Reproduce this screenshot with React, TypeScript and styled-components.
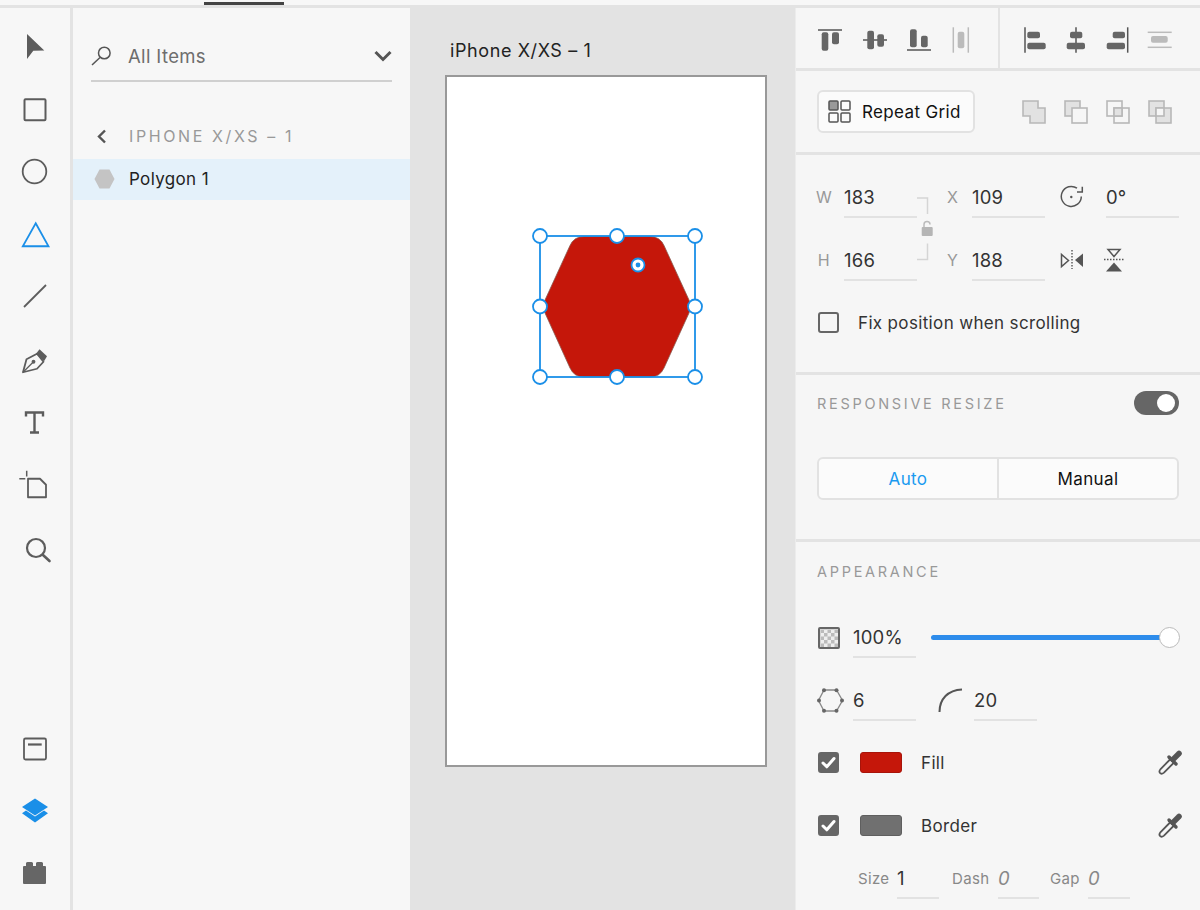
import styled, { createGlobalStyle } from "styled-components";

const GlobalStyle = createGlobalStyle`
    html, body {
        margin: 0;
        padding: 0;
        background: #f7f7f7;
    }
    * {
        box-sizing: border-box;
    }
`;

const Page = styled.div`
    width: 1200px;
    height: 910px;
    overflow: hidden;
    display: flex;
    flex-direction: column;
    background: #f7f7f7;
    color: #333;
    font-family: Inter, "Liberation Sans", sans-serif;
    font-size: 17px;
    letter-spacing: 0.35px;
`;

const TopBar = styled.div`
    height: 8px;
    flex: none;
    padding: 2px 0 0 204px;
    border-bottom: 3px solid #e3e3e3;
`;

const ActiveTab = styled.div`
    width: 80px;
    height: 3px;
    background: #444;
`;

const Workspace = styled.div`
    flex: 1;
    min-height: 0;
    display: flex;
`;

/* left tool rail */
const ToolRail = styled.nav`
    width: 73px;
    flex: none;
    display: flex;
    flex-direction: column;
    padding: 7.6px 0 6px 0;
    border-right: 3px solid #e3e3e3;
`;

const Tool = styled.div`
    width: 70px;
    height: 62.75px;
    flex: none;
    display: flex;
    align-items: center;
    justify-content: center;
`;

const RailBottom = styled.div`
    margin-top: auto;
    display: flex;
    flex-direction: column;
`;

const BottomTool = styled(Tool)`
    height: 62px;
`;

/* layers panel */
const LayersPanel = styled.aside`
    width: 337px;
    flex: none;
    display: flex;
    flex-direction: column;
`;

const SearchRow = styled.div`
    margin: 28px 18px 0;
    height: 46px;
    padding-bottom: 4px;
    display: flex;
    align-items: center;
    border-bottom: 2px solid #d0d0d0;
`;

const SearchText = styled.span`
    margin-left: 17px;
    flex: 1;
    font-size: 18.5px;
    color: #6d6d6d;
`;

const BackRow = styled.div`
    margin-top: 34px;
    height: 40px;
    display: flex;
    align-items: center;
    padding-left: 24px;
`;

const BackTitle = styled.span`
    margin-left: 22px;
    font-size: 16px;
    letter-spacing: 2.6px;
    color: #999;
`;

const LayerRow = styled.div`
    margin-top: 3px;
    height: 41px;
    display: flex;
    align-items: center;
    padding: 0 0 1px 21px;
    background: #e4f1fa;
    color: #222;
`;

const LayerName = styled.span`
    margin-left: 14px;
`;

/* canvas */
const Canvas = styled.main`
    width: 385px;
    flex: none;
    background: #e3e3e3;
    padding: 32px 0 0 35px;
`;

const ArtboardTitle = styled.div`
    height: 22px;
    line-height: 22px;
    margin: 0 0 13px 5px;
    font-size: 18px;
    letter-spacing: 0.6px;
    color: #222;
`;

const Artboard = styled.div`
    position: relative;
    width: 322px;
    height: 692px;
    background: #fff;
    border: 2px solid #999;
`;

const Selection = styled.svg`
    position: absolute;
    left: 83px;
    top: 149px;
`;

/* inspector */
const Inspector = styled.aside`
    flex: 1;
    min-width: 0;
    display: flex;
    flex-direction: column;
    background: #f6f6f6;
    border-left: 1px solid #ececec;
`;

const AlignBar = styled.section`
    height: 63px;
    flex: none;
    display: flex;
    border-bottom: 3px solid #e3e3e3;
`;

const AlignGroup = styled.div<{ $width: number; $pad: number; $gap: number }>`
    width: ${(p) => p.$width}px;
    padding: 17px 0 0 ${(p) => p.$pad}px;
    display: flex;
    gap: ${(p) => p.$gap}px;
`;

const AlignDivider = styled.div`
    width: 2px;
    background: #e3e3e3;
`;

const GridBar = styled.section`
    height: 84px;
    flex: none;
    display: flex;
    align-items: center;
    justify-content: space-between;
    padding: 0 28px 0 21px;
    border-bottom: 3px solid #e3e3e3;
`;

const RepeatButton = styled.button`
    width: 158px;
    height: 43px;
    display: flex;
    align-items: center;
    gap: 11px;
    padding: 0 0 0 9px;
    background: #fbfbfb;
    border: 2px solid #e2e2e2;
    border-radius: 6px;
    font: inherit;
    letter-spacing: inherit;
    color: #111;
`;

const BooleanGroup = styled.div`
    display: flex;
    gap: 18px;
`;

const GeometrySection = styled.section`
    height: 220px;
    flex: none;
    padding: 22px 0 0 20px;
    border-bottom: 3px solid #e3e3e3;
`;

const GeometryGrid = styled.div`
    display: grid;
    grid-template-columns: 28px 73px 30px 25px 73px 61px 73px;
    grid-template-rows: 41px 41px;
    row-gap: 22px;
`;

const AxisLabel = styled.span<{ $lead?: number }>`
    line-height: 40px;
    padding-right: ${(p) => (p.$lead ? 0 : 14)}px;
    text-align: ${(p) => (p.$lead ? "left" : "right")};
    font-size: 16px;
    color: #999;
`;

const ValueField = styled.div<{ $width?: number; $muted?: boolean }>`
    width: ${(p) => (p.$width ? `${p.$width}px` : "auto")};
    height: 41px;
    line-height: 40px;
    font-size: 18.5px;
    letter-spacing: 0.2px;
    color: ${(p) => (p.$muted ? "#888" : "#333")};
    font-style: ${(p) => (p.$muted ? "italic" : "normal")};
    border-bottom: 2px solid #e2e2e2;
`;

const LockLink = styled.svg`
    grid-column: 3;
    grid-row: 1 / 3;
`;

const GridIcon = styled.div`
    display: flex;
    align-items: center;
    gap: 20px;
    height: 41px;
    padding: 0 0 1px 15px;

    svg {
        flex: none;
    }
`;

const CheckRow = styled.div`
    margin: 31px 0 0 2px;
    display: flex;
    align-items: center;
    gap: 19px;
    color: #333;
`;

const CheckBox = styled.div<{ $checked?: boolean }>`
    width: 21px;
    height: 21px;
    flex: none;
    display: flex;
    align-items: center;
    justify-content: center;
    border-radius: 3px;
    border: 2px solid #666;
    background: ${(p) => (p.$checked ? "#666" : "transparent")};
`;

const ResponsiveSection = styled.section`
    height: 167px;
    flex: none;
    padding: 16px 21px 0 21px;
    border-bottom: 3px solid #e3e3e3;
`;

const SectionHead = styled.div`
    display: flex;
    align-items: center;
    justify-content: space-between;
    height: 24px;
`;

const SectionTitle = styled.h3`
    margin: 0;
    font-size: 14.5px;
    font-weight: 400;
    letter-spacing: 2.7px;
    color: #999;
`;

const Toggle = styled.div`
    width: 45px;
    height: 24px;
    display: flex;
    align-items: center;
    justify-content: flex-end;
    padding-right: 4px;
    border-radius: 12px;
    background: #666;
`;

const ToggleKnob = styled.div`
    width: 18px;
    height: 18px;
    border-radius: 50%;
    background: #fff;
`;

const Segmented = styled.div`
    margin-top: 42px;
    height: 43px;
    display: grid;
    grid-template-columns: 180px 1fr;
    background: #fbfbfb;
    border: 2px solid #e2e2e2;
    border-radius: 6px;
`;

const Segment = styled.div<{ $active?: boolean }>`
    display: flex;
    align-items: center;
    justify-content: center;
    color: ${(p) => (p.$active ? "#1a9af0" : "#111")};
    border-right: ${(p) => (p.$active ? "2px solid #e2e2e2" : "none")};
`;

const AppearanceSection = styled.section`
    flex: 1;
    padding: 20px 0 0 21px;
`;

const AppearanceTitle = styled(SectionTitle)`
    line-height: 20px;
`;

const OpacityRow = styled.div`
    margin-top: 35px;
    display: flex;
    align-items: center;
`;

const ShapeRow = styled(OpacityRow)`
    margin-top: 22px;
`;

const RowIcon = styled.div`
    width: 36px;
    flex: none;
    display: flex;
`;

const Slider = styled.div`
    position: relative;
    margin-left: 15px;
    width: 239px;
    height: 5px;
    border-radius: 3px;
    background: #2d8ceb;
`;

const SliderKnob = styled.div`
    position: absolute;
    right: -10px;
    top: -8px;
    width: 21px;
    height: 21px;
    border-radius: 50%;
    background: #fff;
    border: 1px solid #bbb;
`;

const CornerSlot = styled.div`
    width: 36px;
    margin-left: 22px;
    flex: none;
    display: flex;
`;

const PaintRow = styled.div<{ $top: number }>`
    margin-top: ${(p) => p.$top}px;
    height: 21px;
    padding: 0 17px 0 1px;
    display: flex;
    align-items: center;
`;

const Swatch = styled.div<{ $color: string; $edge: string }>`
    width: 42px;
    height: 21px;
    margin-left: 21px;
    border-radius: 3px;
    background: ${(p) => p.$color};
    border: 1px solid ${(p) => p.$edge};
`;

const PaintLabel = styled.span`
    margin-left: 19px;
    flex: 1;
    color: #333;
`;

const StrokeRow = styled.div`
    margin: 22px 0 0 41px;
    display: grid;
    grid-template-columns: 39px 42px 59px 41px 49px 42px;
`;

const StrokeLabel = styled.span<{ $lead?: number }>`
    line-height: 42px;
    padding-left: ${(p) => p.$lead ?? 0}px;
    font-size: 15px;
    color: #888;
`;

const DARK = "#5c5c5c";
const BLUE = "#1a8fe8";
const GREY = "#bbb";

function ToolIcon({ cy, children }: { cy: number; children: React.ReactNode }) {
    return (
        <svg width="36" height="36" viewBox={`17 ${cy - 18} 36 36`} fill="none">
            {children}
        </svg>
    );
}

function AlignIcon({ children, nudge }: { children: React.ReactNode; nudge?: boolean }) {
    return (
        <svg width="30" height="30" viewBox="0 0 30 30" fill={nudge ? GREY : "#666"}>
            {children}
        </svg>
    );
}

function Bar({ x, y, w, h }: { x: number; y: number; w: number; h: number }) {
    return <rect x={x} y={y} width={w} height={h} rx="2" />;
}

function Rule({ x1, y1, x2, y2, grey }: { x1: number; y1: number; x2: number; y2: number; grey?: boolean }) {
    return <line x1={x1} y1={y1} x2={x2} y2={y2} stroke={grey ? GREY : "#555"} strokeWidth="1.5" />;
}

function Check() {
    return (
        <svg width="15" height="13" viewBox="0 0 15 13" fill="none">
            <path d="M2 7l3.8 3.8L13 2.5" stroke="#fff" strokeWidth="3" strokeLinecap="round" strokeLinejoin="round" />
        </svg>
    );
}

function Dropper() {
    return (
        <svg width="26" height="26" viewBox="0 0 26 26" fill="none">
            <path d="M14 8.5L3.6 19q-2 2.400-.6 4t4-.4L17.500 12" stroke="#555" strokeWidth="1.800" />
            <path d="M12 7l7 7" stroke="#555" strokeWidth="3.400" strokeLinecap="round" />
            <path d="M16 9.500l6-6" stroke="#555" strokeWidth="5.500" strokeLinecap="round" />
        </svg>
    );
}

function BooleanIcon({ kind }: { kind: "add" | "subtract" | "intersect" | "exclude" }) {
    const stroke = "#b8b8b8";
    const fill = "#e2e2e2";
    if (kind === "add") {
        return (
            <svg width="24" height="24" viewBox="0 0 24 24">
                <path d="M1 1h15v7h7v15H8v-7H1z" fill={fill} stroke={stroke} strokeWidth="1.600" />
            </svg>
        );
    }
    return (
        <svg width="24" height="24" viewBox="0 0 24 24" fill="none">
            <rect x="1" y="1" width="15" height="15" fill={kind === "intersect" ? "none" : fill} stroke={stroke} strokeWidth="1.600" />
            <rect x="8" y="8" width="15" height="15" fill={kind === "subtract" ? "#f6f6f6" : kind === "exclude" ? fill : "none"} stroke={stroke} strokeWidth="1.600" />
            {kind === "intersect" && <rect x="8" y="8" width="8" height="8" fill={fill} stroke={stroke} strokeWidth="1.600" />}
            {kind === "exclude" && <rect x="8" y="8" width="8" height="8" fill="#f6f6f6" stroke={stroke} strokeWidth="1.600" />}
        </svg>
    );
}

const handles: [number, number][] = [
    [540, 236],
    [617, 236],
    [695, 236],
    [540, 306.5],
    [695, 306.5],
    [540, 377],
    [617, 377],
    [695, 377],
];

function App() {
    return (
        <Page>
            <GlobalStyle />
            <TopBar>
                <ActiveTab />
            </TopBar>
            <Workspace>
                <ToolRail>
                    <Tool>
                        <ToolIcon cy={47}>
                            <path d="M27 34l17.300 16.500-11 .3L27 59z" fill={DARK} />
                        </ToolIcon>
                    </Tool>
                    <Tool>
                        <ToolIcon cy={109.75}>
                            <rect x="24.500" y="99" width="21" height="21" rx="1" stroke={DARK} strokeWidth="2" />
                        </ToolIcon>
                    </Tool>
                    <Tool>
                        <ToolIcon cy={172.5}>
                            <circle cx="34.500" cy="172" r="11.800" stroke={DARK} strokeWidth="1.800" />
                        </ToolIcon>
                    </Tool>
                    <Tool>
                        <ToolIcon cy={235.25}>
                            <path d="M35.700 223.500L48.500 246.500H22.800z" stroke={BLUE} strokeWidth="1.800" />
                        </ToolIcon>
                    </Tool>
                    <Tool>
                        <ToolIcon cy={298}>
                            <path d="M24 307l22-22" stroke={DARK} strokeWidth="1.800" />
                        </ToolIcon>
                    </Tool>
                    <Tool>
                        <ToolIcon cy={360.75}>
                            <path d="M23 372l3.500-13 10.500-5.500 6.500 8-6.500 7z" stroke={DARK} strokeWidth="1.800" strokeLinejoin="round" />
                            <path d="M39.500 349l7.500 7-3 5-8-7.500z" fill={DARK} />
                            <path d="M23 372l10-10" stroke={DARK} strokeWidth="1.300" />
                            <circle cx="33.500" cy="361.500" r="1.900" fill={DARK} />
                        </ToolIcon>
                    </Tool>
                    <Tool>
                        <ToolIcon cy={423.5}>
                            <path d="M26 417v-4h17v4M34.500 413v20M30 433h9" stroke={DARK} strokeWidth="2.400" />
                        </ToolIcon>
                    </Tool>
                    <Tool>
                        <ToolIcon cy={486.25}>
                            <path d="M28 479h12l6 6v12.500H28z" stroke={DARK} strokeWidth="1.800" strokeLinejoin="round" />
                            <path d="M26.700 471v5.700M19.300 479h6" stroke={DARK} strokeWidth="1.500" />
                        </ToolIcon>
                    </Tool>
                    <Tool>
                        <ToolIcon cy={549}>
                            <circle cx="36" cy="548" r="9" stroke={DARK} strokeWidth="2.200" />
                            <path d="M43 555l6.500 6" stroke={DARK} strokeWidth="2.600" strokeLinecap="round" />
                        </ToolIcon>
                    </Tool>
                    <RailBottom>
                        <BottomTool>
                            <ToolIcon cy={749}>
                                <rect x="24" y="738.500" width="22" height="21" rx="1.500" stroke={DARK} strokeWidth="1.800" />
                                <path d="M28 744.500h13.700" stroke={DARK} strokeWidth="2.200" />
                            </ToolIcon>
                        </BottomTool>
                        <BottomTool>
                            <ToolIcon cy={811}>
                                <path d="M35 798.500l13 8.500-13 8.500-13-8.500z" fill={BLUE} />
                                <path d="M26 810.500l9 6 9-6 4 2.700-13 9.300-13-9.300z" fill={BLUE} />
                            </ToolIcon>
                        </BottomTool>
                        <BottomTool>
                            <ToolIcon cy={873}>
                                <path d="M24 866h2v-3a2 2 0 0 1 2-1h3a2 2 0 0 1 2 1v3h3v-3a2 2 0 0 1 2-1h3a2 2 0 0 1 2 1v3h2a1 1 0 0 1 1 1v16a1 1 0 0 1-1 1H24a1 1 0 0 1-1-1v-16a1 1 0 0 1 1-1z" fill="#666" />
                            </ToolIcon>
                        </BottomTool>
                    </RailBottom>
                </ToolRail>

                <LayersPanel>
                    <SearchRow>
                        <svg width="20" height="20" viewBox="0 0 20 20" fill="none">
                            <circle cx="13.300" cy="7" r="5.800" stroke="#555" strokeWidth="1.500" />
                            <path d="M9 11.500L1 19" stroke="#555" strokeWidth="1.500" />
                        </svg>
                        <SearchText>All Items</SearchText>
                        <svg width="18" height="12" viewBox="0 0 18 12" fill="none">
                            <path d="M1.500 2L9 9.500 16.500 2" stroke="#555" strokeWidth="3" />
                        </svg>
                    </SearchRow>
                    <BackRow>
                        <svg width="10" height="15" viewBox="0 0 10 15" fill="none">
                            <path d="M8 1.500L2 7.500l6 6" stroke="#555" strokeWidth="2.400" />
                        </svg>
                        <BackTitle>IPHONE X/XS – 1</BackTitle>
                    </BackRow>
                    <LayerRow>
                        <svg width="21" height="20" viewBox="0 0 21 20">
                            <path d="M5.500.5h10l5 9.500-5 9.500h-10L.5 10z" fill="#c4c4c4" />
                        </svg>
                        <LayerName>Polygon 1</LayerName>
                    </LayerRow>
                </LayersPanel>

                <Canvas>
                    <ArtboardTitle>iPhone X/XS – 1</ArtboardTitle>
                    <Artboard>
                        <Selection width="175" height="161" viewBox="530 226 175 161" fill="none">
                            <path
                                d="M545 300L570 245.500Q574 236.500 584 236.500H650Q660 236.500 664 245.500L689 300Q692 306.500 689 313L664 368Q660 377 650 377H584Q574 377 570 368L545 313Q542 306.500 545 300Z"
                                fill="#c5170a"
                                stroke="#8a5a50"
                                strokeWidth="0.800"
                            />
                            <rect x="540" y="236" width="155" height="141" stroke={BLUE} strokeWidth="1.800" />
                            {handles.map(([x, y]) => (
                                <circle key={`${x}-${y}`} cx={x} cy={y} r="7" fill="#fff" stroke={BLUE} strokeWidth="1.800" />
                            ))}
                            <circle cx="638" cy="265" r="6.500" fill="#fff" stroke={BLUE} strokeWidth="1.800" />
                            <circle cx="638" cy="265" r="2.400" fill={BLUE} />
                        </Selection>
                    </Artboard>
                </Canvas>

                <Inspector>
                    <AlignBar>
                        <AlignGroup $width={202} $pad={19} $gap={15}>
                            <AlignIcon>
                                <Rule x1={3} y1={5} x2={27} y2={5} />
                                <Bar x={6.7} y={7.3} w={6.6} h={18.4} />
                                <Bar x={17} y={7.3} w={7} h={12} />
                            </AlignIcon>
                            <AlignIcon>
                                <Rule x1={3} y1={15} x2={27} y2={15} />
                                <Bar x={7.3} y={5.7} w={6.7} h={18.6} />
                                <Bar x={17.3} y={9.3} w={6.7} h={12.4} />
                            </AlignIcon>
                            <AlignIcon>
                                <Rule x1={2} y1={25} x2={26} y2={25} />
                                <Bar x={5} y={4.3} w={6.7} h={18} />
                                <Bar x={16} y={10.7} w={6.7} h={11.6} />
                            </AlignIcon>
                            <AlignIcon nudge>
                                <Rule x1={3.3} y1={2.3} x2={3.3} y2={27.7} grey />
                                <Rule x1={18.3} y1={2.3} x2={18.3} y2={27.7} grey />
                                <Bar x={7.7} y={6.7} w={6.6} h={16.6} />
                            </AlignIcon>
                        </AlignGroup>
                        <AlignDivider />
                        <AlignGroup $width={200} $pad={20} $gap={12}>
                            <AlignIcon>
                                <Rule x1={5} y1={2.3} x2={5} y2={27.7} />
                                <Bar x={7.3} y={6.7} w={12.7} h={6.6} />
                                <Bar x={7.3} y={17.7} w={18.4} h={6.6} />
                            </AlignIcon>
                            <AlignIcon>
                                <Rule x1={14} y1={2.3} x2={14} y2={27.7} />
                                <Bar x={8} y={6.7} w={12.3} h={6.6} />
                                <Bar x={4.7} y={17.7} w={18.3} h={6.6} />
                            </AlignIcon>
                            <AlignIcon>
                                <Rule x1={23.7} y1={2.3} x2={23.7} y2={27.7} />
                                <Bar x={8.7} y={6.7} w={12.3} h={6.6} />
                                <Bar x={2.7} y={17.7} w={18.3} h={6.6} />
                            </AlignIcon>
                            <AlignIcon nudge>
                                <Rule x1={1.7} y1={7.3} x2={25.7} y2={7.3} grey />
                                <Rule x1={1.7} y1={22.3} x2={25.7} y2={22.3} grey />
                                <Bar x={5} y={11} w={16.7} h={6.7} />
                            </AlignIcon>
                        </AlignGroup>
                    </AlignBar>

                    <GridBar>
                        <RepeatButton>
                            <svg width="23" height="23" viewBox="0 0 23 23" fill="none" stroke="#555" strokeWidth="1.500">
                                <rect x="1" y="1" width="9" height="9" rx="1" fill="#999" />
                                <rect x="13" y="1" width="9" height="9" rx="1" />
                                <rect x="1" y="13" width="9" height="9" rx="1" />
                                <rect x="13" y="13" width="9" height="9" rx="1" />
                            </svg>
                            Repeat Grid
                        </RepeatButton>
                        <BooleanGroup>
                            <BooleanIcon kind="add" />
                            <BooleanIcon kind="subtract" />
                            <BooleanIcon kind="intersect" />
                            <BooleanIcon kind="exclude" />
                        </BooleanGroup>
                    </GridBar>

                    <GeometrySection>
                        <GeometryGrid>
                            <AxisLabel>W</AxisLabel>
                            <ValueField>183</ValueField>
                            <LockLink width="30" height="104" viewBox="917 177 30 104" fill="none">
                                <path d="M917 198h10.500v16M917 259.500h10.500v-16" stroke="#d5d5d5" strokeWidth="1.500" />
                                <path d="M924 227v-2.500a3 3 0 0 1 6 0" stroke="#bbb" strokeWidth="1.500" />
                                <rect x="921.700" y="227" width="11" height="9" rx="1" fill="#b5b5b5" />
                            </LockLink>
                            <AxisLabel $lead={1}>X</AxisLabel>
                            <ValueField>109</ValueField>
                            <GridIcon>
                                <svg width="24" height="24" viewBox="0 0 24 24" fill="none">
                                    <path d="M17 3.200A10 10 0 1 0 21.300 11.500" stroke="#555" strokeWidth="1.500" />
                                    <path d="M17 7h5.300V1.800" stroke="#555" strokeWidth="1.500" />
                                    <circle cx="11.300" cy="12" r="1.200" fill="#555" />
                                </svg>
                            </GridIcon>
                            <ValueField>0°</ValueField>
                            <AxisLabel>H</AxisLabel>
                            <ValueField>166</ValueField>
                            <AxisLabel $lead={1}>Y</AxisLabel>
                            <ValueField>188</ValueField>
                            <GridIcon>
                                <svg width="24" height="22" viewBox="0 0 24 22" fill="none">
                                    <path d="M1.500 5.500v12l7-6z" stroke="#555" strokeWidth="1.500" />
                                    <path d="M23 4.500v13.500l-8-7z" fill="#555" />
                                    <path d="M12 1v19" stroke="#555" strokeWidth="1.400" strokeDasharray="1.500 1.500" />
                                </svg>
                                <svg width="20" height="24" viewBox="0 0 20 24" fill="none">
                                    <path d="M4 1.500h12l-6 7z" stroke="#555" strokeWidth="1.500" />
                                    <path d="M2 23.500h16l-8-9z" fill="#555" />
                                    <path d="M0 11.500h20" stroke="#555" strokeWidth="1.400" strokeDasharray="1.500 1.500" />
                                </svg>
                            </GridIcon>
                        </GeometryGrid>
                        <CheckRow>
                            <CheckBox />
                            Fix position when scrolling
                        </CheckRow>
                    </GeometrySection>

                    <ResponsiveSection>
                        <SectionHead>
                            <SectionTitle>RESPONSIVE RESIZE</SectionTitle>
                            <Toggle>
                                <ToggleKnob />
                            </Toggle>
                        </SectionHead>
                        <Segmented>
                            <Segment $active>Auto</Segment>
                            <Segment>Manual</Segment>
                        </Segmented>
                    </ResponsiveSection>

                    <AppearanceSection>
                        <AppearanceTitle>APPEARANCE</AppearanceTitle>
                        <OpacityRow>
                            <RowIcon>
                                <svg width="23" height="23" viewBox="0 0 23 23">
                                    <defs>
                                        <pattern id="checker" width="7" height="7" patternUnits="userSpaceOnUse">
                                            <rect width="7" height="7" fill="#eee" />
                                            <rect width="3.500" height="3.500" fill="#bbb" />
                                            <rect x="3.500" y="3.500" width="3.500" height="3.500" fill="#bbb" />
                                        </pattern>
                                    </defs>
                                    <rect x="2" y="2" width="20" height="20" rx="1" fill="url(#checker)" stroke="#666" strokeWidth="2" />
                                </svg>
                            </RowIcon>
                            <ValueField $width={63}>100%</ValueField>
                            <Slider>
                                <SliderKnob />
                            </Slider>
                        </OpacityRow>
                        <ShapeRow>
                            <RowIcon>
                                <svg width="27" height="25" viewBox="0 0 27 25" fill="none">
                                    <path d="M7 2h12.500l6 10.500-6 10.500H7L1.500 12.500z" stroke="#888" strokeWidth="1.300" />
                                    <g fill="#666">
                                        <circle cx="7" cy="2.200" r="2" />
                                        <circle cx="19.500" cy="2.200" r="2" />
                                        <circle cx="25" cy="12.500" r="2" />
                                        <circle cx="19.500" cy="22.800" r="2" />
                                        <circle cx="7" cy="22.800" r="2" />
                                        <circle cx="2" cy="12.500" r="2" />
                                    </g>
                                </svg>
                            </RowIcon>
                            <ValueField $width={63}>6</ValueField>
                            <CornerSlot>
                                <svg width="25" height="25" viewBox="0 0 25 25" fill="none">
                                    <path d="M1.500 24C1.500 11 10 2 24 1.500" stroke="#555" strokeWidth="2" />
                                </svg>
                            </CornerSlot>
                            <ValueField $width={63}>20</ValueField>
                        </ShapeRow>
                        <PaintRow $top={31}>
                            <CheckBox $checked>
                                <Check />
                            </CheckBox>
                            <Swatch $color="#c5170a" $edge="#a8140a" />
                            <PaintLabel>Fill</PaintLabel>
                            <Dropper />
                        </PaintRow>
                        <PaintRow $top={42}>
                            <CheckBox $checked>
                                <Check />
                            </CheckBox>
                            <Swatch $color="#707070" $edge="#5f5f5f" />
                            <PaintLabel>Border</PaintLabel>
                            <Dropper />
                        </PaintRow>
                        <StrokeRow>
                            <StrokeLabel>Size</StrokeLabel>
                            <ValueField>1</ValueField>
                            <StrokeLabel $lead={13}>Dash</StrokeLabel>
                            <ValueField $muted>0</ValueField>
                            <StrokeLabel $lead={11}>Gap</StrokeLabel>
                            <ValueField $muted>0</ValueField>
                        </StrokeRow>
                    </AppearanceSection>
                </Inspector>
            </Workspace>
        </Page>
    );
}

export default App;
